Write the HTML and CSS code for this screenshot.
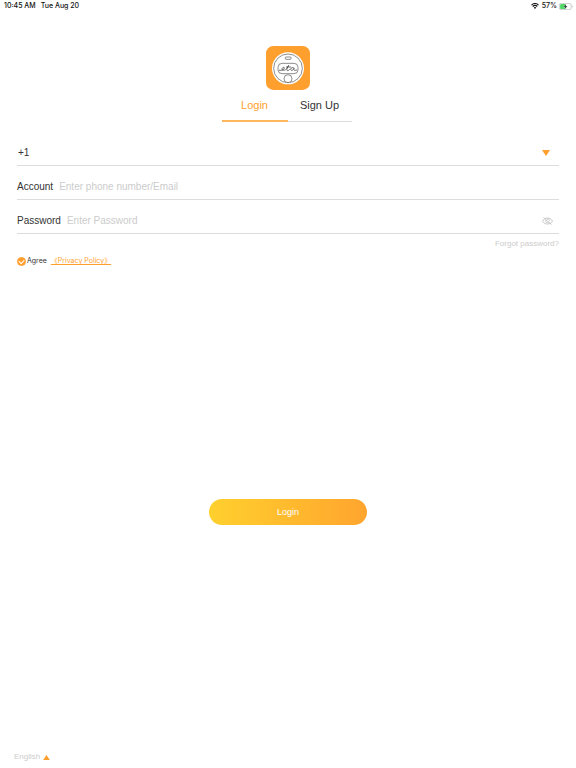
FILE: index.html
```html
<!DOCTYPE html>
<html lang="en">
<head>
    <meta charset="UTF-8">
    <meta name="viewport" content="width=device-width, initial-scale=1.0">
    <title>Login</title>
    <link rel="stylesheet" href="styles.css">
</head>
<body>

    <header class="status-bar">
        <span>10:45 AM</span>
        <span class="status-date">Tue Aug 20</span>
        <svg class="wifi" viewBox="0 0 16 12" aria-hidden="true">
            <path d="M1 4.2C5 .6 11 .6 15 4.2M3.4 7c2.6-2.4 6.6-2.4 9.2 0" fill="none" stroke="#111" stroke-width="2.2"/>
            <path d="M5.4 9c1.5-1.4 3.7-1.4 5.2 0L8 11.8z" fill="#111"/>
        </svg>
        <span>57%</span>
        <svg class="battery" viewBox="0 0 28 14" aria-hidden="true">
            <rect x="0.7" y="0.7" width="23.6" height="12.6" rx="3.6" fill="#fff" stroke="#aaa" stroke-width="1.2"/>
            <rect x="2.2" y="2.2" width="12" height="9.6" rx="2" fill="#4cd964"/>
            <path d="M14.5 1.8L8.6 7.6h3.6l-1.2 4.8 6-6.2h-3.7z" fill="#111" stroke="#fff" stroke-width="0.6"/>
            <path d="M26 4.8c1.6.8 1.6 3.6 0 4.4z" fill="#aaa"/>
        </svg>
    </header>

    <main>
        <svg class="logo" viewBox="0 0 132 132" role="img" aria-label="eta">
            <rect width="132" height="132" rx="22" fill="#ff9f2e"/>
            <circle cx="66" cy="67" r="48" fill="#fff"/>
            <g fill="none" stroke="#555" stroke-width="2">
                <circle cx="66" cy="67" r="43"/>
                <rect x="58" y="33" width="17" height="7" rx="2"/>
                <rect x="36" y="52" width="60" height="31" rx="12"/>
                <circle cx="66" cy="98" r="12" fill="#fff"/>
                <path d="M40 73c7 1 15-2 15-7 0-4-7-2-7 3 0 6 9 5 14-1l6-10c-4 8-8 16-3 16 3 0 5-3 7-5M61 63h13M84 66c-4-4-10 0-10 4 0 5 7 4 10-3-2 6 1 8 8 5" stroke="#333" stroke-linecap="round"/>
            </g>
        </svg>

        <nav class="tabs">
            <a href="#login" class="tab active" aria-current="page">Login</a>
            <a href="#signup" class="tab">Sign Up</a>
        </nav>

        <form id="loginForm">
            <div class="field">
                <select id="country" name="country" aria-label="Country code">
                    <option value="1">+1</option>
                    <option value="44">+44</option>
                    <option value="86">+86</option>
                </select>
                <svg class="arrow-down" viewBox="0 0 8 6" aria-hidden="true"><path d="M0 0h8L4 6z" fill="#ff9f2e"/></svg>
            </div>
            <div class="field">
                <label for="account">Account</label>
                <input type="text" id="account" name="account" placeholder="Enter phone number/Email">
            </div>
            <div class="field">
                <label for="password">Password</label>
                <input type="password" id="password" name="password" placeholder="Enter Password">
                <button type="button" class="eye" aria-label="Show password">
                    <svg viewBox="0 0 22 16">
                        <path d="M1 8C5 0 17 0 21 8 17 16 5 16 1 8zM3 1l16 14" fill="none" stroke="#bbb" stroke-width="1.6"/>
                        <path d="M8 6c-2 5 3 7 6 4M10 4c3-1 5 1 5 4" fill="none" stroke="#bbb" stroke-width="1.6"/>
                    </svg>
                </button>
            </div>
            <a href="#forgot" class="forgot">Forgot password?</a>
            <div class="agree">
                <input type="checkbox" id="agree" name="agree" checked>
                <label for="agree">Agree</label>
                <a href="#privacy">《Privacy Policy》</a>
            </div>
            <button type="submit" class="login-button">Login</button>
        </form>
    </main>

    <footer>
        <button type="button" class="language">
            English
            <svg viewBox="0 0 8 6" aria-hidden="true"><path d="M4 0l4 6H0z" fill="#ff9f2e"/></svg>
        </button>
    </footer>

</body>
</html>
```

FILE: styles.css
```css
* {
    box-sizing: border-box;
}
body {
    display: flex;
    flex-direction: column;
    min-height: 100vh;
    margin: 0;
    background-color: #fff;
    color: #333;
    font-family: "Liberation Sans", Arial, sans-serif;
    font-size: 10px;
    line-height: 12px;
}
input, select, button {
    margin: 0;
    padding: 0;
    border: none;
    background: none;
    color: inherit;
    font: inherit;
}
button {
    cursor: pointer;
}
.status-bar {
    display: flex;
    align-items: center;
    height: 12px;
    padding: 0 3px 0 4px;
    color: #111;
    font-family: Inter, sans-serif;
    font-size: 7px;
    font-weight: 500;
}
.status-date {
    margin-left: 5px;
}
.wifi {
    width: 8px;
    height: 6px;
    margin: 0 3px 0 auto;
}
.battery {
    width: 14px;
    height: 7px;
    margin-left: 2px;
}
main, form {
    display: flex;
    flex: 1;
    flex-direction: column;
}
.logo {
    width: 44px;
    height: 44px;
    margin: 34px auto 0;
}
.tabs {
    display: flex;
    justify-content: center;
    margin-top: 6px;
    padding-right: 3px;
}
.tab {
    width: 64px;
    padding-bottom: 7px;
    border-bottom: 1px solid #ddd;
    color: #333;
    font-size: 11px;
    line-height: 18px;
    text-align: center;
    text-decoration: none;
}
.tab.active {
    width: 66px;
    padding-bottom: 6px;
    border-bottom: 2px solid #ffb75e;
    color: #ff9f2e;
}
form {
    padding: 10px 17px 0;
}
.field {
    display: flex;
    align-items: center;
    height: 34px;
    padding-top: 9px;
    border-bottom: 1px solid #ddd;
}
.field select {
    flex: 1;
    padding-left: 1px;
    appearance: none;
}
.arrow-down {
    width: 8px;
    height: 6px;
    margin-right: 9px;
}
.field input {
    flex: 1;
    min-width: 0;
    margin-left: 6px;
}
.field input::placeholder {
    color: #ccc;
    opacity: 1;
}
.eye {
    display: flex;
    margin-right: 6px;
}
.eye svg {
    width: 11px;
    height: 8px;
}
.forgot {
    align-self: flex-end;
    margin-top: 4px;
    color: #ccc;
    font-size: 8px;
    text-decoration: none;
}
.agree {
    display: flex;
    align-items: center;
    margin: 5px 0 6px;
    font-family: Inter, "Noto Sans CJK SC", sans-serif;
    font-size: 7px;
}
.agree input {
    display: flex;
    width: 9px;
    height: 9px;
    border: 1px solid #ff9f2e;
    border-radius: 50%;
    appearance: none;
}
.agree input:checked {
    background-color: #ff9f2e;
}
.agree input:checked::before {
    content: "";
    width: 5px;
    height: 3px;
    margin: 1px;
    border: solid #fff;
    border-width: 0 0 1px 1px;
    transform: rotate(-45deg);
}
.agree label {
    margin-left: 1px;
}
.agree a {
    margin-left: 4px;
    color: #ff9f2e;
}
.login-button {
    width: 158px;
    height: 26px;
    margin: auto;
    border-radius: 13px;
    background: linear-gradient(to right, #ffd02e, #ffa52e);
    color: #fff;
    font-size: 9px;
}
footer {
    padding: 0 14px 5px;
}
.language {
    display: flex;
    align-items: center;
    gap: 3px;
    color: #ccc;
    font-size: 8px;
}
.language svg {
    width: 7px;
    height: 5px;
}
```
